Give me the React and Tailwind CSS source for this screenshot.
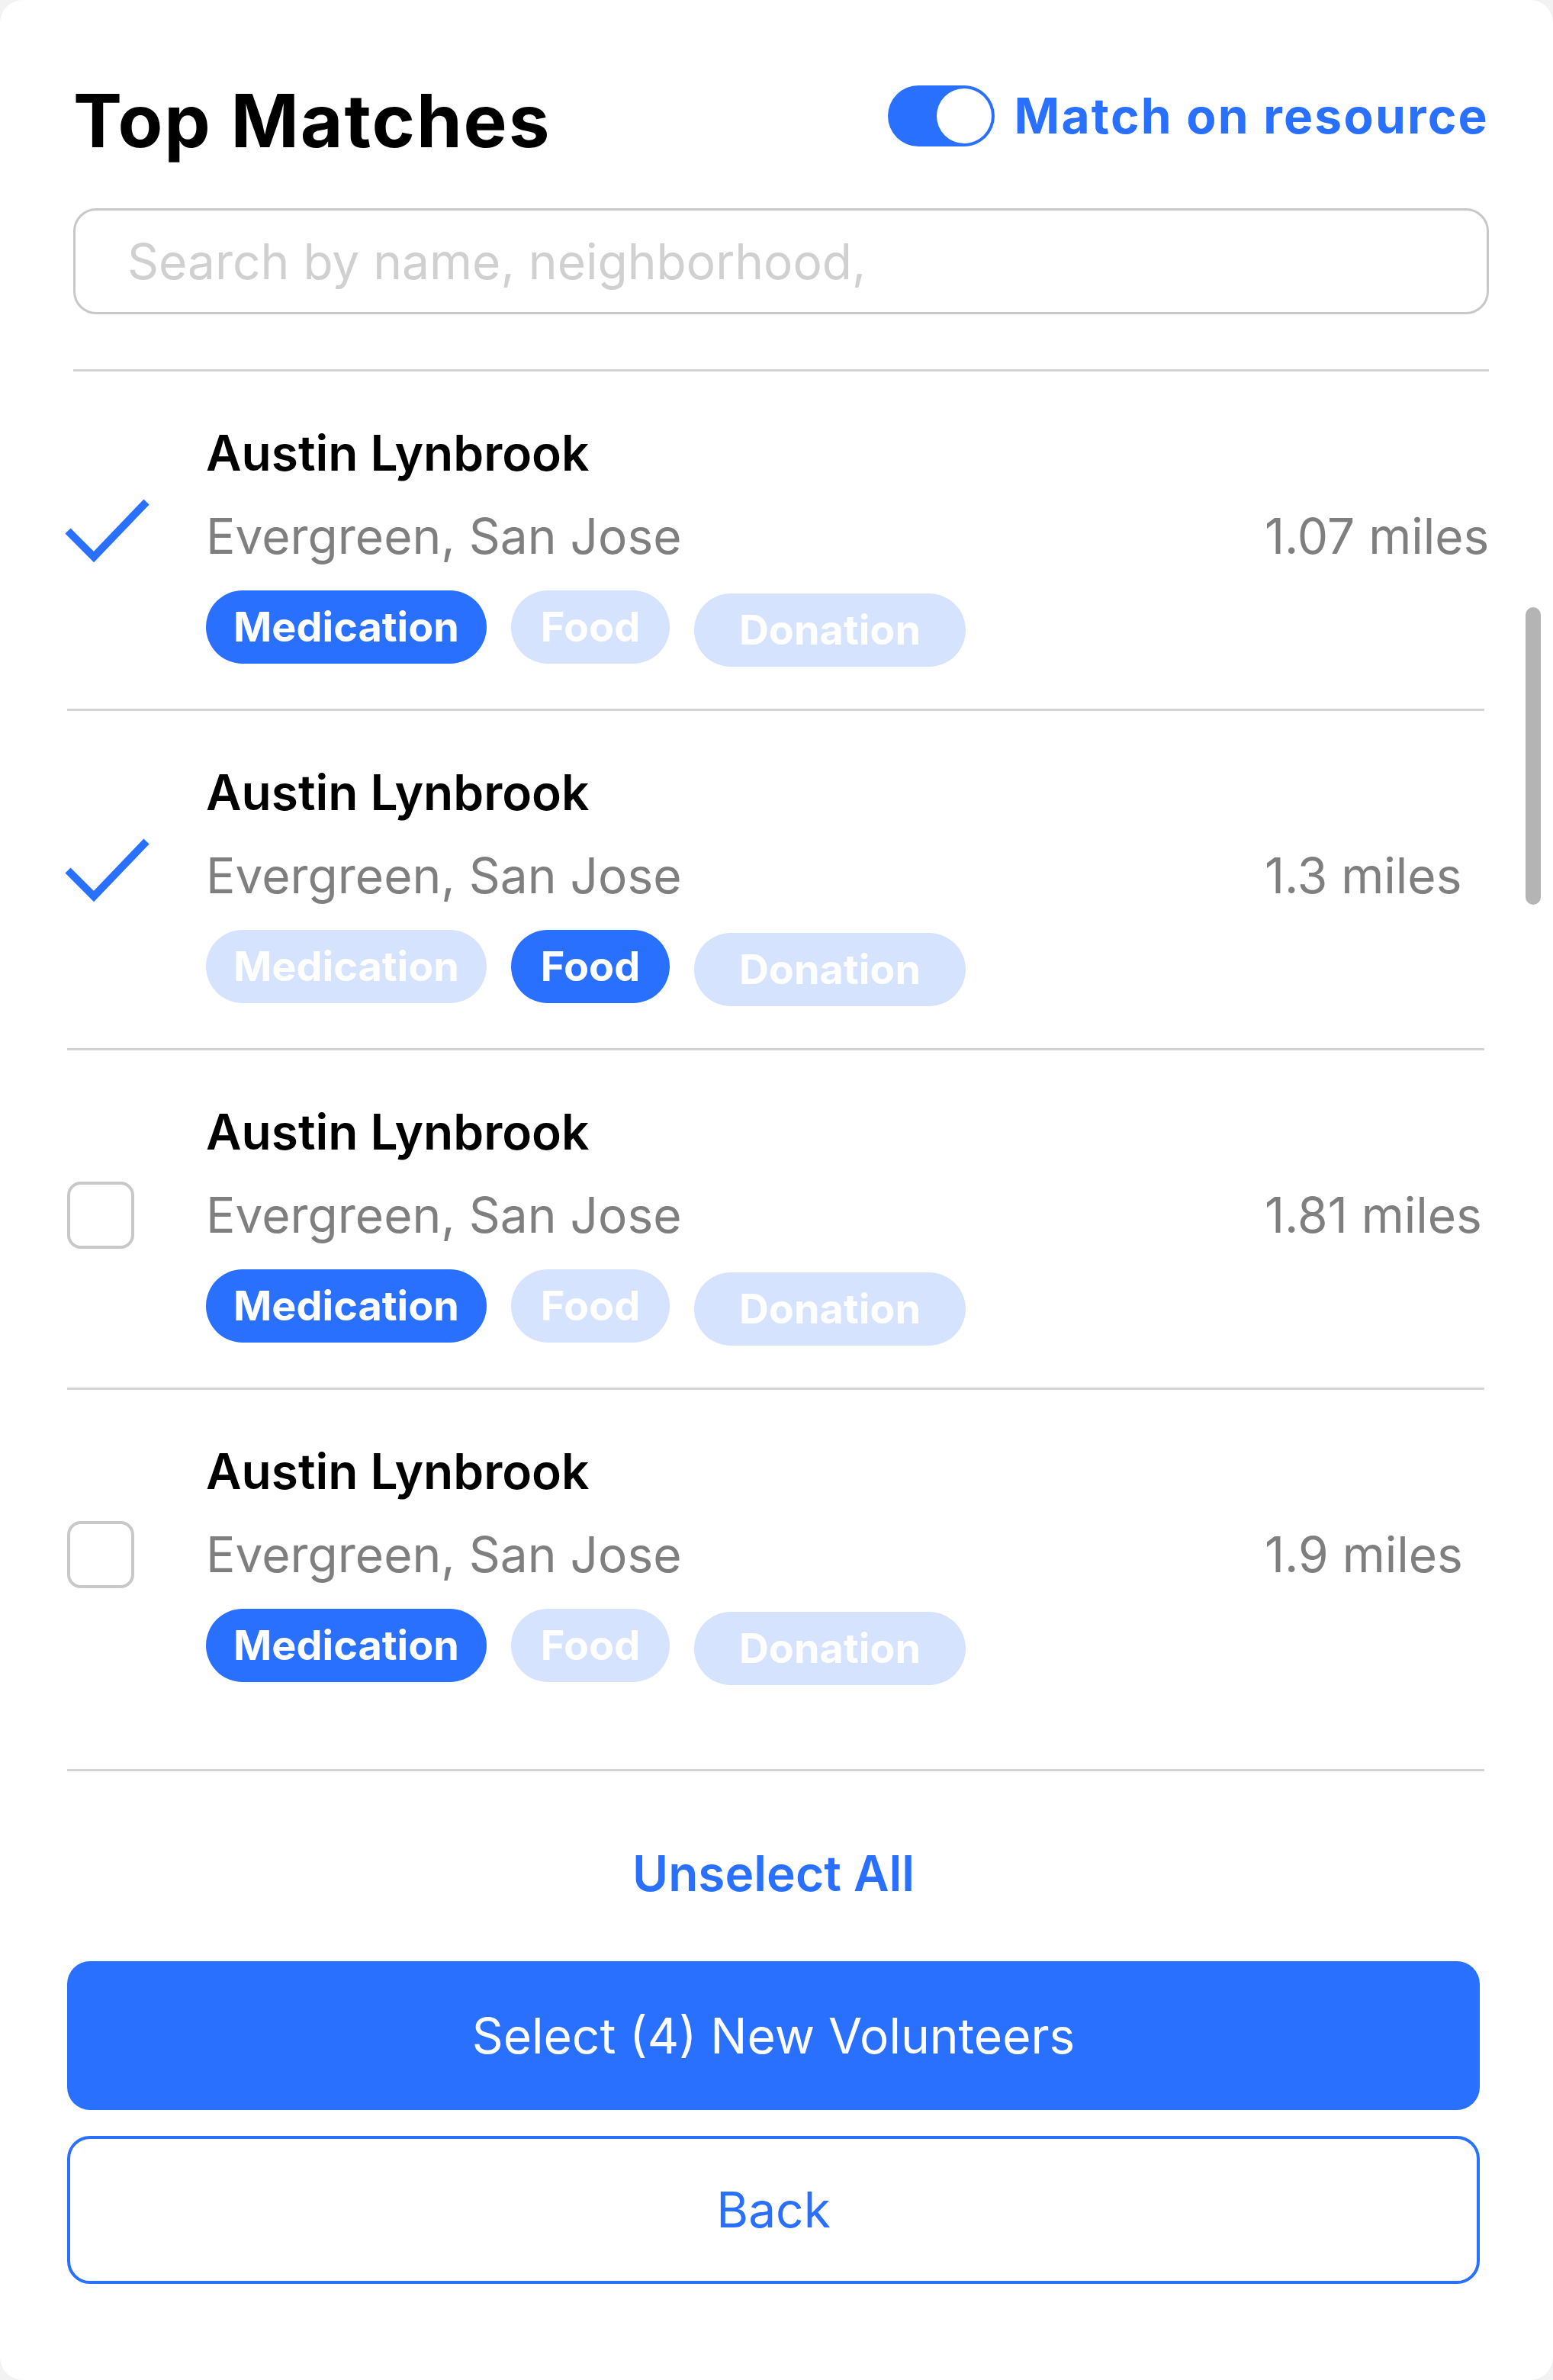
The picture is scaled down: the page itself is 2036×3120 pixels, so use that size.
import { useState } from "react";

const BLUE = "#2970ff";

const people = [
  { id: 1, name: "Austin Lynbrook", place: "Evergreen, San Jose", miles: "1.07 miles", tags: ["Medication"], checked: true },
  { id: 2, name: "Austin Lynbrook", place: "Evergreen, San Jose", miles: "1.3 miles", tags: ["Food"], checked: true },
  { id: 3, name: "Austin Lynbrook", place: "Evergreen, San Jose", miles: "1.81 miles", tags: ["Medication"], checked: false },
  { id: 4, name: "Austin Lynbrook", place: "Evergreen, San Jose", miles: "1.9 miles", tags: ["Medication"], checked: false },
];

function Toggle({ on, onChange }) {
  return (
    <button
      type="button"
      onClick={() => onChange(!on)}
      className="relative w-[140px] h-[80px] rounded-full bg-[#2970ff] shrink-0"
    >
      <span className="absolute right-[4px] top-[4px] w-[72px] h-[72px] rounded-full bg-white" />
    </button>
  );
}

function Tag({ label, active }) {
  const base = "h-[96px] rounded-full flex items-center text-white font-bold text-[54px] leading-none";
  if (label === "Medication")
    return <span className={`${base} w-[368px] justify-center ${active ? "bg-[#2970ff]" : "bg-[#d6e3ff]"}`}>{label}</span>;
  if (label === "Food")
    return <span className={`${base} w-[208px] justify-center ${active ? "bg-[#2970ff]" : "bg-[#d6e3ff]"}`}>{label}</span>;
  return <span className={`${base} w-[356px] justify-center mt-[4px] ${active ? "bg-[#2970ff]" : "bg-[#d6e3ff]"}`}>{label}</span>;
}

function Row({ person, last, onToggle }) {
  return (
    <div className={`flex pt-[68px] ${last ? "pb-[110px]" : "pb-[55px] border-b-[3px] border-[#d3d3d3]"}`}>
      <div className="w-[182px] shrink-0 relative">
        {person.checked ? (
          <button type="button" onClick={onToggle} className="absolute -left-[7px] top-[91px]">
            <svg width="120" height="94" viewBox="0 0 120 94" className="block">
              <path d="M8 50 L42 84 L111 12" fill="none" stroke={BLUE} strokeWidth="10" />
            </svg>
          </button>
        ) : (
          <button type="button" onClick={onToggle} className="absolute left-0 top-[104px]">
            <span className="block w-[88px] h-[88px] rounded-[18px] border-[4px] border-[#c8c8c8] bg-white" />
          </button>
        )}
      </div>
      <div className="flex-1">
        <div className="text-[64px] leading-[78px] font-semibold text-black">{person.name}</div>
        <div className="flex mt-[31px] text-[64px] leading-[78px] text-[#7f7f7f] whitespace-nowrap">
          <span className="w-[1388px] shrink-0">{person.place}</span>
          <span>{person.miles}</span>
        </div>
        <div className="flex items-start gap-[32px] mt-[32px]">
          {["Medication", "Food", "Donation"].map((t) => (
            <Tag key={t} label={t} active={person.tags.includes(t)} />
          ))}
        </div>
      </div>
    </div>
  );
}

export default function App() {
  const [matchOn, setMatchOn] = useState(true);
  const [list, setList] = useState(people);
  const [query, setQuery] = useState("");

  const toggle = (id) =>
    setList(list.map((p) => (p.id === id ? { ...p, checked: !p.checked } : p)));

  return (
    <div className="min-h-[3120px] bg-[#f2f2f2] font-['Inter',sans-serif]">
      <div className="min-h-[3120px] bg-white rounded-[30px] flex flex-col">
        {/* header */}
        <div className="pl-[96px] pr-[84px]">
          <div className="flex items-center justify-between h-[104px] mt-[100px]">
            <h1 className="text-[96px] leading-none font-bold tracking-[0.02em] text-black mt-[12px]">Top Matches</h1>
            <div className="flex items-center gap-[26px]">
              <Toggle on={matchOn} onChange={setMatchOn} />
              <span className="text-[64px] leading-none font-bold tracking-[0.035em] text-[#2970ff]">Match on resource</span>
            </div>
          </div>
          <input
            value={query}
            onChange={(e) => setQuery(e.target.value)}
            placeholder="Search by name, neighborhood,"
            className="mt-[69px] w-full h-[139px] rounded-[30px] border-[3px] border-[#c8c8c8] px-[68px] text-[64px] placeholder:text-[#d0d0d0] outline-none"
          />
          <div className="mt-[72px] border-t-[3px] border-[#d3d3d3]" />
        </div>

        {/* list */}
        <div className="relative">
          <div className="ml-[88px] w-[1858px] border-b-[3px] border-[#d3d3d3]">
            {list.map((p, i) => (
              <Row key={p.id} person={p} last={i === list.length - 1} onToggle={() => toggle(p.id)} />
            ))}
          </div>
          <div className="absolute left-[2000px] top-[309px] w-[20px] h-[390px] rounded-full bg-[#b4b4b4]" />
        </div>

        {/* actions */}
        <div className="ml-[88px] w-[1852px] flex flex-col items-center">
          <button type="button" className="mt-[102px] text-[64px] leading-none font-semibold text-[#2970ff]">
            Unselect All
          </button>
          <button type="button" className="mt-[83px] w-full h-[195px] rounded-[30px] bg-[#2970ff] text-white text-[64px]">
            Select ({list.filter((p) => p.checked).length + 2}) New Volunteers
          </button>
          <button type="button" className="mt-[34px] w-full h-[194px] rounded-[30px] border-[4px] border-[#2970ff] text-[#2970ff] text-[64px]">
            Back
          </button>
        </div>
      </div>
    </div>
  );
}
